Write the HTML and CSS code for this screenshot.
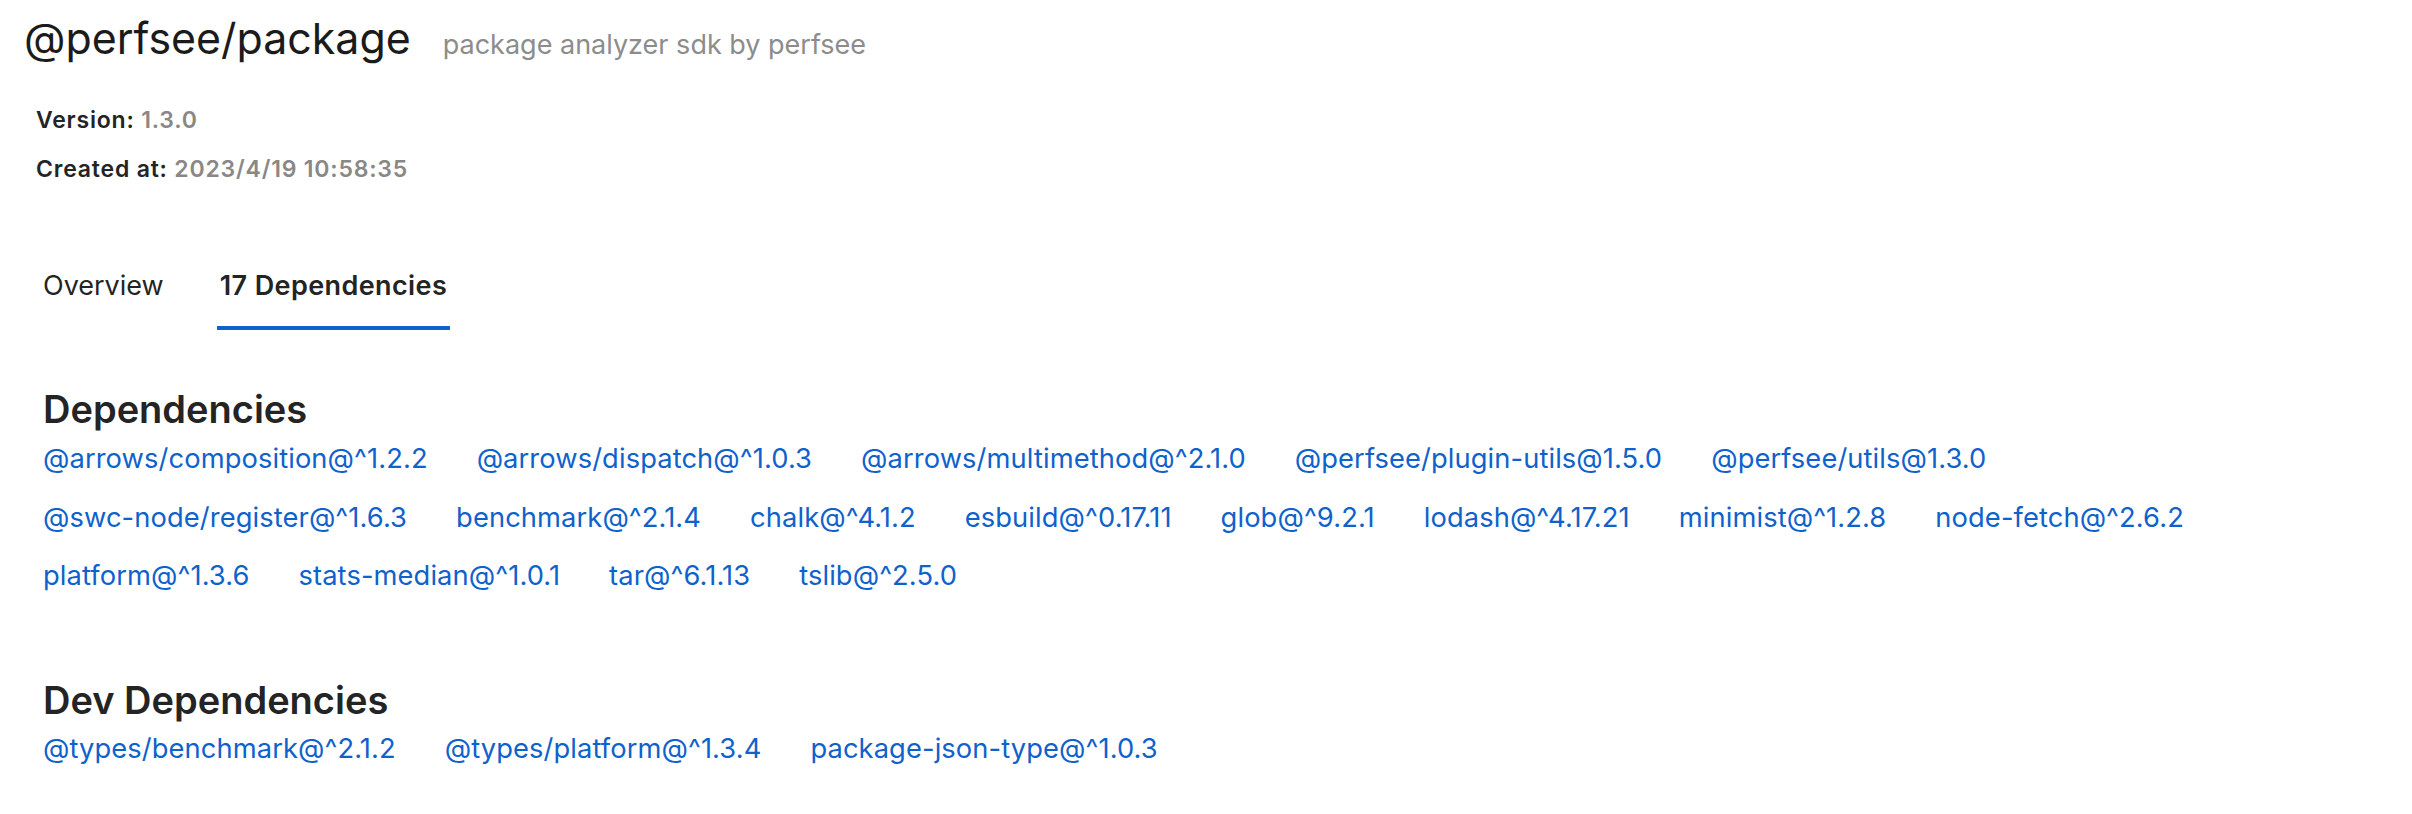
FILE: index.html
```html
<!DOCTYPE html>
<html lang="en">
<head>
<meta charset="utf-8">
<title>@perfsee/package</title>
<link rel="stylesheet" href="styles.css">
</head>
<body>
<div class="page">
  <header class="header">
    <h1 class="title">@perfsee/package</h1>
    <span class="subtitle">package analyzer sdk by perfsee</span>
  </header>
  <div class="meta">
    <div class="meta-row"><span class="meta-label">Version:</span> <span class="meta-value">1.3.0</span></div>
    <div class="meta-row"><span class="meta-label">Created at:</span> <span class="meta-value">2023/4/19 10:58:35</span></div>
  </div>
  <nav class="tabs">
    <button class="tab">Overview</button>
    <button class="tab tab-active">17 Dependencies</button>
  </nav>
  <section class="deps">
    <h2 class="deps-title">Dependencies</h2>
    <div class="dep-list">
      <div class="dep-row">
        <a class="dep" href="#">@arrows/composition@^1.2.2</a>
        <a class="dep" href="#">@arrows/dispatch@^1.0.3</a>
        <a class="dep" href="#">@arrows/multimethod@^2.1.0</a>
        <a class="dep" href="#">@perfsee/plugin-utils@1.5.0</a>
        <a class="dep" href="#">@perfsee/utils@1.3.0</a>
      </div>
      <div class="dep-row">
        <a class="dep" href="#">@swc-node/register@^1.6.3</a>
        <a class="dep" href="#">benchmark@^2.1.4</a>
        <a class="dep" href="#">chalk@^4.1.2</a>
        <a class="dep" href="#">esbuild@^0.17.11</a>
        <a class="dep" href="#">glob@^9.2.1</a>
        <a class="dep" href="#">lodash@^4.17.21</a>
        <a class="dep" href="#">minimist@^1.2.8</a>
        <a class="dep" href="#">node-fetch@^2.6.2</a>
      </div>
      <div class="dep-row">
        <a class="dep" href="#">platform@^1.3.6</a>
        <a class="dep" href="#">stats-median@^1.0.1</a>
        <a class="dep" href="#">tar@^6.1.13</a>
        <a class="dep" href="#">tslib@^2.5.0</a>
      </div>
    </div>
  </section>
  <section class="deps deps-dev">
    <h2 class="deps-title">Dev Dependencies</h2>
    <div class="dep-list">
      <div class="dep-row">
        <a class="dep" href="#">@types/benchmark@^2.1.2</a>
        <a class="dep" href="#">@types/platform@^1.3.4</a>
        <a class="dep" href="#">package-json-type@^1.0.3</a>
      </div>
    </div>
  </section>
</div>
</body>
</html>
```
FILE: styles.css
```css
html, body {
  margin: 0;
  padding: 0;
  background: #ffffff;
}

body {
  font-family: Inter, "Noto Sans", "Liberation Sans", sans-serif;
  color: #242424;
}

.page {
  padding: 13px 23px 0 24px;
}

.header {
  display: flex;
  align-items: baseline;
  height: 50px;
}

.title {
  margin: 0;
  font-size: 42.9px;
  line-height: 50px;
  font-weight: 400;
  color: #1b1b1b;
}

.subtitle {
  margin-left: 32px;
  font-size: 27px;
  color: #8c8c8c;
}

.meta {
  margin: 42px 0 0 12px;
  display: flex;
  flex-direction: column;
  gap: 19px;
}

.meta-row {
  font-size: 23px;
  line-height: 30px;
  font-weight: 600;
  letter-spacing: 0.8px;
}

.meta-label {
  color: #242424;
}

.meta-value {
  color: #8a8886;
}

.tabs {
  display: flex;
  gap: 50px;
  margin: 82px 0 0 16px;
}

.tab {
  font-family: inherit;
  font-size: 27px;
  line-height: 40px;
  font-weight: 400;
  color: #242424;
  background: none;
  border: 0;
  border-bottom: 4px solid transparent;
  padding: 0 3px 20px 3px;
  margin: 0;
  cursor: pointer;
}

.tab-active {
  font-weight: 600;
  letter-spacing: 0.4px;
  border-bottom-color: #0f62cb;
}

.deps {
  margin: 57px 0 0 19px;
}

.deps-dev {
  margin-top: 86px;
}

.deps-title {
  margin: 0 0 12px 0;
  font-size: 38px;
  line-height: 44px;
  font-weight: 600;
  color: #242424;
}

.deps-dev .deps-title {
  margin-bottom: 11px;
}

.dep-list {
  display: flex;
  flex-direction: column;
  row-gap: 26.5px;
}

.dep-row {
  display: flex;
  column-gap: 49px;
}

.dep {
  font-size: 27.3px;
  line-height: 32px;
  letter-spacing: 0.1px;
  color: #0f62cb;
  text-decoration: none;
}
```
